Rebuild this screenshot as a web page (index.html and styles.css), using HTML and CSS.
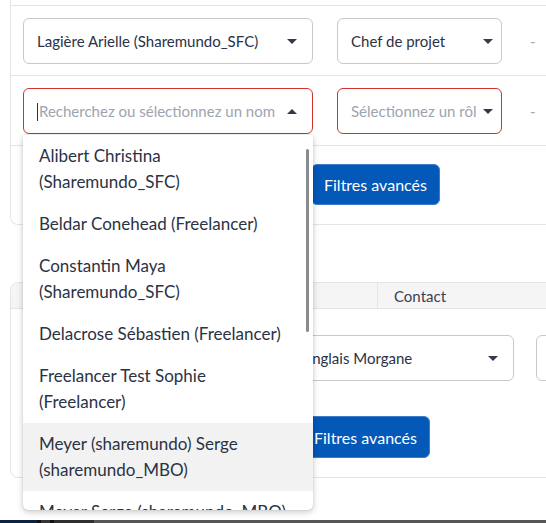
FILE: index.html
```html
<!DOCTYPE html>
<html lang="fr">
<head>
    <meta charset="UTF-8">
    <meta name="viewport" content="width=device-width, initial-scale=1.0">
    <title>Équipe projet</title>
    <link rel="stylesheet" href="styles.css">
</head>
<body>
    <div class="page">
        <div class="card card-members">
            <div class="row row-tail"></div>
            <div class="row">
                <div class="select select-name">
                    <span class="select-value">Lagière Arielle (Sharemundo_SFC)</span>
                    <span class="caret"></span>
                </div>
                <div class="select select-role">
                    <span class="select-value">Chef de projet</span>
                    <span class="caret"></span>
                </div>
                <span class="dash">-</span>
            </div>
            <div class="row">
                <div class="combo">
                    <div class="select select-name is-invalid">
                        <span class="select-value placeholder"><span class="text-cursor"></span>Recherchez ou sélectionnez un nom</span>
                        <span class="caret caret-up"></span>
                    </div>
                    <div class="menu">
                        <ul class="menu-list">
                            <li class="menu-item">Alibert Christina (Sharemundo_SFC)</li>
                            <li class="menu-item">Beldar Conehead (Freelancer)</li>
                            <li class="menu-item">Constantin Maya (Sharemundo_SFC)</li>
                            <li class="menu-item">Delacrose Sébastien (Freelancer)</li>
                            <li class="menu-item">Freelancer Test Sophie (Freelancer)</li>
                            <li class="menu-item is-hover">Meyer (sharemundo) Serge (sharemundo_MBO)</li>
                            <li class="menu-item">Meyer Serge (sharemundo_MBO)</li>
                        </ul>
                        <span class="menu-scroll"></span>
                    </div>
                </div>
                <div class="select select-role is-invalid">
                    <span class="select-value placeholder">Sélectionnez un rôle</span>
                    <span class="caret"></span>
                </div>
                <span class="dash">-</span>
            </div>
            <div class="row-actions">
                <button class="btn btn-filters">Filtres avancés</button>
            </div>
        </div>

        <div class="card card-contacts">
            <div class="thead">
                <div class="th th-main"></div>
                <div class="th">Contact</div>
            </div>
            <div class="form-row">
                <div class="select select-contact">
                    <span class="select-value">Langlais Morgane</span>
                    <span class="caret"></span>
                </div>
                <div class="select select-next"></div>
            </div>
            <div class="row-actions">
                <button class="btn btn-filters-alt">Filtres avancés</button>
            </div>
        </div>
    </div>
    <div class="taskbar">
        <span class="task task-start"></span>
        <span class="task task-sep"></span>
        <span class="task task-icon"></span>
        <span class="task task-sep"></span>
        <span class="task task-app"></span>
    </div>
</body>
</html>
```

FILE: styles.css
```css
* { box-sizing: border-box; }
html, body { margin: 0; height: 100%; }
body {
    font-family: "Lato", "Open Sans", sans-serif;
    font-size: 15px;
    color: #2b3244;
    background: #fff;
    overflow: hidden;
    display: flex;
    flex-direction: column;
}
.page { flex: 1; padding-left: 10px; }

/* cards / tables */
.card { width: 620px; border: 1px solid #e3e5ea; background: #fff; }
.card-members { border-top: none; border-radius: 0 0 0 8px; }
.card-contacts { margin-top: 57px; border-radius: 8px 0 0 8px; }

.row { display: flex; align-items: center; padding: 12px 12px 11px; border-bottom: 1px solid #e3e5ea; }
.row-tail { height: 6px; padding: 0; }
.row-actions { display: flex; padding: 18px 12px 19px; }

/* selects */
.select {
    display: flex;
    align-items: center;
    height: 46px;
    border: 1px solid #c9c9c9;
    border-radius: 6px;
    background: #fff;
    padding: 0 15px 0 13px;
    flex-shrink: 0;
}
.select-value { flex: 1; white-space: nowrap; overflow: hidden; }
.placeholder { color: #9ea3b1; }
.is-invalid { border-color: #d3302f; }
.select-name { width: 290px; }
.select-role { width: 165px; margin-left: 24px; padding-right: 8px; }
.select-role .select-value { margin-right: 6px; }
.caret {
    width: 0; height: 0;
    border-left: 5px solid transparent;
    border-right: 5px solid transparent;
    border-top: 5px solid #333a4a;
}
.caret-up { border-top: none; border-bottom: 5px solid #333a4a; }
.text-cursor { display: inline-block; width: 1px; height: 18px; background: #2b3244; vertical-align: -4px; margin-right: 1px; }
.dash { margin-left: 28px; color: #a3a8b3; }

/* open dropdown */
.combo { position: relative; }
.menu {
    position: absolute;
    top: calc(100% + 1px);
    left: 0;
    width: 290px;
    height: 375px;
    background: #fff;
    border-radius: 0 0 5px 5px;
    box-shadow: 0 2px 6px rgba(0, 0, 0, 0.22), 0 0 1px rgba(0, 0, 0, 0.25);
    overflow: hidden;
    z-index: 10;
}
.menu-list { list-style: none; margin: 0; padding: 0; }
.menu-item { padding: 8px 24px 8px 16px; font-size: 17px; line-height: 26px; }
.menu-item.is-hover { background: #f2f2f2; }
.menu-scroll {
    position: absolute;
    top: 14px;
    right: 4px;
    width: 3px;
    height: 183px;
    border-radius: 2px;
    background: #8b8b8b;
}

/* buttons */
.btn {
    font: inherit;
    font-size: 16px;
    color: #fff;
    background: #0358b8;
    border: 1px solid #3f7bc8;
    border-radius: 6px;
    height: 41px;
    padding: 0 12px;
    cursor: pointer;
}
.btn:hover { background: #02479a; }
.btn-filters { margin-left: 288px; }
.btn-filters-alt { margin-left: 278px; height: 42px; }

/* contacts table */
.thead { display: flex; height: 26px; background: #f5f5f6; border-bottom: 1px solid #e3e5ea; border-radius: 8px 0 0 0; font-size: 15px; color: #3b4150; }
.th { display: flex; align-items: center; padding-left: 16px; }
.th-main { width: 367px; border-right: 1px solid #e3e5ea; }
.form-row { display: flex; align-items: center; padding: 26px 12px 0; }
.select-contact { width: 231px; margin-left: 260px; }
.select-next { width: 60px; margin-left: 22px; }
.card-contacts .row-actions { padding-top: 35px; }

/* desktop bar under the page */
.taskbar { display: flex; height: 3px; background: #565656; }
.task { height: 100%; }
.task-start { width: 37px; background: #0d2142; }
.task-sep { width: 4px; background: #121212; }
.task-icon { width: 9px; background: #353535; }
.task-app { width: 40px; background: #2f2f2f; }
```
